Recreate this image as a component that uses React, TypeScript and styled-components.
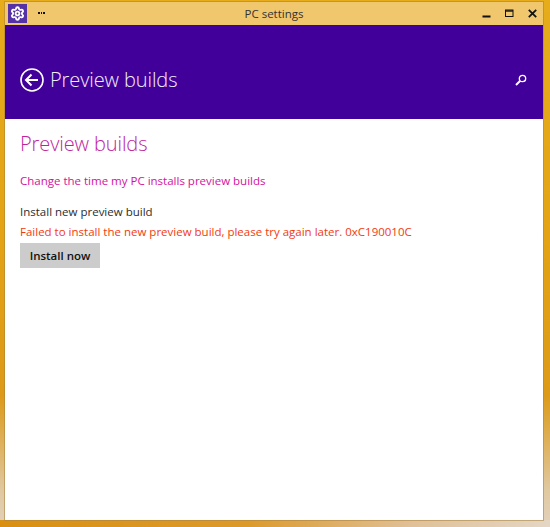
import React from "react";
import styled, { createGlobalStyle } from "styled-components";
import { Settings } from "lucide-react";

const GlobalStyle = createGlobalStyle`
  html, body {
    margin: 0;
    padding: 0;
    overflow: hidden;
  }
  body {
    font-family: "Open Sans", "Noto Sans", "Liberation Sans", sans-serif;
  }
`;

const Desktop = styled.div`
  width: 550px;
  height: 527px;
  box-sizing: border-box;
  padding: 2px 7px 7px 5px;
  background: linear-gradient(180deg, #e6ac1c 0%, #e3a314 45%, #dc9a18 75%, #e0c8a0 93%, #e2d2bc 100%);
  position: relative;
  display: flex;
`;

const BottomEdge = styled.div`
  position: absolute;
  left: 0;
  right: 0;
  bottom: 0;
  height: 7px;
  background: linear-gradient(90deg, #d98f12 0%, #dc9a2c 45%, #e0c098 75%, #e4d6c4 100%);
`;

const Window = styled.div`
  flex: 1;
  display: flex;
  flex-direction: column;
  min-width: 0;
  background: #fff;
  box-shadow: 0 0 0 1px rgba(170, 130, 60, 0.55);
  z-index: 1;
`;

const TitleBar = styled.div`
  height: 23px;
  flex: none;
  display: grid;
  grid-template-columns: 1fr auto 1fr;
  align-items: center;
  background: #f1c76e;
  color: #222;
`;

const TitleLeft = styled.div`
  display: flex;
  align-items: center;
  gap: 11px;
  padding-left: 3px;
`;

const AppIcon = styled.div`
  width: 19px;
  height: 19px;
  display: flex;
  align-items: center;
  justify-content: center;
  background: #5431a4;
  color: #fff;
`;

const Dots = styled.div`
  display: flex;
  gap: 1px;
  padding-bottom: 2px;
`;

const Dot = styled.span`
  width: 1.5px;
  height: 2px;
  background: #111;
`;

const TitleText = styled.div`
  font-size: 11.5px;
  color: #333;
`;

const TitleControls = styled.div`
  display: flex;
  justify-content: flex-end;
  align-items: center;
  gap: 14px;
  padding-right: 6px;
`;

const ControlIcon = styled.svg`
  display: block;
  color: #111;
`;

const Header = styled.header`
  height: 94px;
  flex: none;
  box-sizing: border-box;
  display: flex;
  align-items: center;
  padding: 15px 16px 0 15px;
  background: #42009b;
  color: #fff;
`;

const BackIcon = styled.svg`
  display: block;
  flex: none;
  margin-right: 6px;
`;

const HeaderTitle = styled.h1`
  flex: 1;
  margin: 0;
  font-size: 20px;
  font-weight: 300;
  letter-spacing: -0.1px;
  color: #f2eef8;
`;

const Content = styled.main`
  flex: 1;
  display: flex;
  flex-direction: column;
  align-items: flex-start;
  padding: 11px 15px 0;
`;

const SectionTitle = styled.h2`
  margin: 0 0 15px;
  font-size: 20px;
  line-height: 27px;
  font-weight: 300;
  letter-spacing: -0.1px;
  color: #c0249c;
`;

const TimeLink = styled.a`
  margin-bottom: 14px;
  font-size: 11.5px;
  line-height: 17px;
  color: #d3109f;
`;

const Label = styled.div`
  margin-bottom: 3px;
  font-size: 11.5px;
  line-height: 17px;
  color: #2c2c2c;
`;

const ErrorText = styled.div`
  margin-bottom: 3px;
  font-size: 11.5px;
  line-height: 17px;
  color: #f23a0e;
`;

const InstallButton = styled.button`
  width: 80px;
  height: 25px;
  padding: 0;
  border: 0;
  background: #cccccc;
  font-family: inherit;
  font-size: 11.5px;
  font-weight: 600;
  color: #111;
`;

export default function App() {
  return (
    <>
      <GlobalStyle />
      <Desktop>
        <BottomEdge />
        <Window>
          <TitleBar>
            <TitleLeft>
              <AppIcon>
                <Settings size={15} strokeWidth={3} />
              </AppIcon>
              <Dots>
                <Dot />
                <Dot />
                <Dot />
              </Dots>
            </TitleLeft>
            <TitleText>PC settings</TitleText>
            <TitleControls>
              <ControlIcon width="9" height="9" viewBox="0 0 9 9">
                <rect x="0.5" y="6.5" width="8" height="2" fill="currentColor" />
              </ControlIcon>
              <ControlIcon width="9" height="9" viewBox="0 0 9 9" fill="none" stroke="currentColor">
                <rect x="0.5" y="1" width="7.5" height="6.5" />
                <line x1="0.5" y1="2" x2="8" y2="2" strokeWidth="1.4" />
              </ControlIcon>
              <ControlIcon width="9" height="9" viewBox="0 0 9 9" stroke="currentColor" strokeWidth="1.8">
                <line x1="0.8" y1="0.8" x2="8.2" y2="8.2" />
                <line x1="8.2" y1="0.8" x2="0.8" y2="8.2" />
              </ControlIcon>
            </TitleControls>
          </TitleBar>
          <Header>
            <BackIcon width="24" height="24" viewBox="0 0 24 24" fill="none" stroke="currentColor">
              <circle cx="12" cy="12" r="11" strokeWidth="1.6" />
              <path d="M6 12h12M11.5 6.5L6 12l5.5 5.5" strokeWidth="2" />
            </BackIcon>
            <HeaderTitle>Preview builds</HeaderTitle>
            <svg width="12" height="12" viewBox="0 0 12 12" fill="none" stroke="currentColor">
              <circle cx="7.5" cy="4.5" r="3.2" strokeWidth="1.3" />
              <line x1="5" y1="7" x2="1" y2="11" strokeWidth="2" />
            </svg>
          </Header>
          <Content>
            <SectionTitle>Preview builds</SectionTitle>
            <TimeLink>Change the time my PC installs preview builds</TimeLink>
            <Label>Install new preview build</Label>
            <ErrorText>Failed to install the new preview build, please try again later. 0xC190010C</ErrorText>
            <InstallButton>Install now</InstallButton>
          </Content>
        </Window>
      </Desktop>
    </>
  );
}
